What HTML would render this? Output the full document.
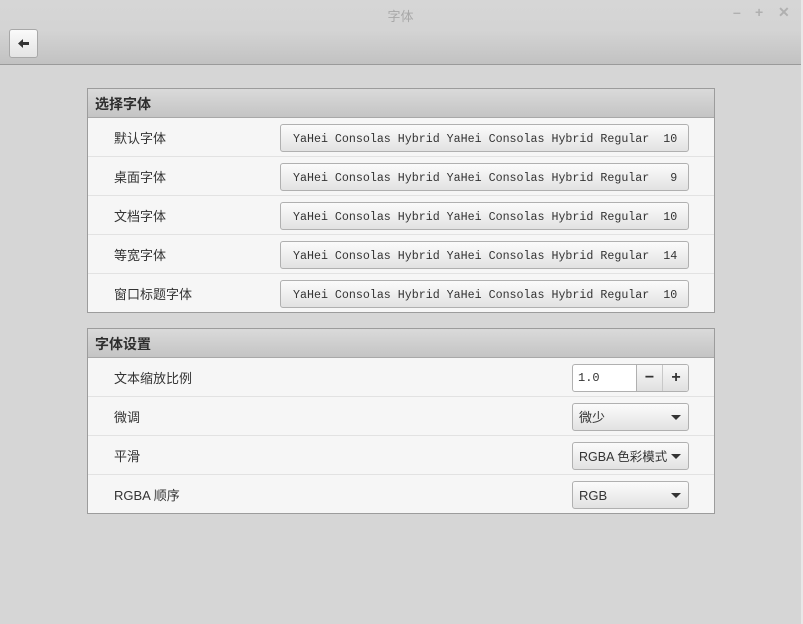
<!DOCTYPE html>
<html><head><meta charset="utf-8"><style>
*{box-sizing:border-box;margin:0;padding:0}
body{width:803px;height:624px;background:#d6d6d6;font-family:"Liberation Sans","Noto Sans CJK SC",sans-serif;font-size:13px;color:#333;position:relative;overflow:hidden}
.top{position:absolute;left:0;top:0;width:801px;height:65px;background:linear-gradient(#d6d6d6 0,#d4d4d4 30px,#c2c2c2 64px);border-bottom:1px solid #9a9a9a}
.title{position:absolute;top:6px;left:0;width:801px;text-align:center;color:#a8a8a8;font-size:13px}
.wc{position:absolute;top:4px;color:#b0b0b0;font-size:14px;font-weight:bold}
.back{position:absolute;left:9px;top:29px;width:29px;height:29px;border:1px solid #a8a8a8;border-radius:3px;background:linear-gradient(#fafafa,#e4e4e4)}
.frame{position:absolute;left:87px;width:628px;border:1px solid #9c9c9c;background:#f6f6f6}
.hd{height:29px;background:linear-gradient(#dadada,#c4c4c4);border-bottom:1px solid #a8a8a8;font-weight:bold;font-size:14px;padding:5px 0 0 7px;color:#2e2e2e}
.row{height:39px;border-bottom:1px solid #e2e2e2;position:relative}
.row:last-child{border-bottom:none;height:38px}
.lab{position:absolute;left:26px;top:10px}
.btn{position:absolute;top:6px;height:28px;border:1px solid #b0b0b0;border-radius:3px;background:linear-gradient(#fbfbfb,#e2e2e2);color:#333;line-height:26px}
.fb{left:192px;width:409px;padding:2px 0 0 12px;white-space:pre;font-family:"Liberation Mono",monospace;font-size:11.65px}
.cb{left:484px;width:117px;padding:1px 0 0 6px;font-size:13px}
.arr{position:absolute;right:7px;top:11px;width:0;height:0;border-left:5px solid transparent;border-right:5px solid transparent;border-top:5px solid #333}
</style></head><body>
<div class="top">
<div class="title">字体</div>
<div class="wc" style="left:733px">–</div>
<div class="wc" style="left:755px">+</div>
<div class="wc" style="left:778px">✕</div>
<div class="back"><svg width="27" height="27" viewBox="0 0 27 27"><path d="M8 13.5 L13 9 L13 12 L19 12 L19 15 L13 15 L13 18 Z" fill="#333"/></svg></div>
</div>
<div style="position:absolute;right:0;top:0;width:2px;height:624px;background:#e8e8e8"></div>
<div class="frame" style="top:88px">
<div class="hd">选择字体</div>
<div class="row"><span class="lab">默认字体</span><div class="btn fb">YaHei Consolas Hybrid YaHei Consolas Hybrid Regular  10</div></div>
<div class="row"><span class="lab">桌面字体</span><div class="btn fb">YaHei Consolas Hybrid YaHei Consolas Hybrid Regular   9</div></div>
<div class="row"><span class="lab">文档字体</span><div class="btn fb">YaHei Consolas Hybrid YaHei Consolas Hybrid Regular  10</div></div>
<div class="row"><span class="lab">等宽字体</span><div class="btn fb">YaHei Consolas Hybrid YaHei Consolas Hybrid Regular  14</div></div>
<div class="row"><span class="lab">窗口标题字体</span><div class="btn fb">YaHei Consolas Hybrid YaHei Consolas Hybrid Regular  10</div></div>
</div>
<div class="frame" style="top:328px">
<div class="hd">字体设置</div>
<div class="row"><span class="lab">文本缩放比例</span>
<div style="position:absolute;left:484px;top:6px;width:117px;height:28px;border:1px solid #b0b0b0;border-radius:3px;background:#fff;overflow:hidden">
<span style="position:absolute;left:5px;top:6px;font-family:'Liberation Mono',monospace;font-size:12px">1.0</span>
<div style="position:absolute;left:63px;top:0;width:26px;height:26px;border-left:1px solid #b0b0b0;background:linear-gradient(#f8f8f8,#e0e0e0);text-align:center;font-weight:bold;font-size:16px;line-height:25px">−</div>
<div style="position:absolute;left:89px;top:0;width:27px;height:26px;border-left:1px solid #c8c8c8;background:linear-gradient(#f8f8f8,#e0e0e0);text-align:center;font-weight:bold;font-size:16px;line-height:25px">+</div>
</div></div>
<div class="row"><span class="lab">微调</span><div class="btn cb">微少<span class="arr"></span></div></div>
<div class="row"><span class="lab">平滑</span><div class="btn cb" style="font-size:12.5px">RGBA 色彩模式<span class="arr"></span></div></div>
<div class="row"><span class="lab">RGBA 顺序</span><div class="btn cb">RGB<span class="arr"></span></div></div>
</div>
</body></html>
